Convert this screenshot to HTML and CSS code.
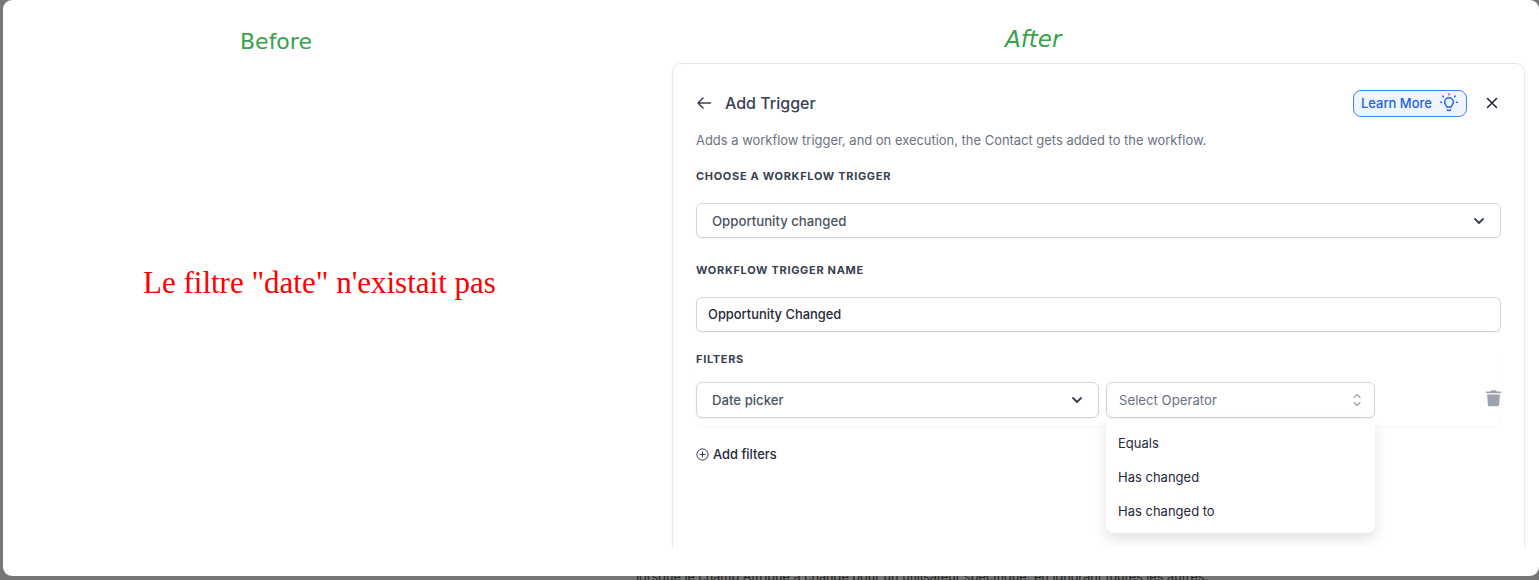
FILE: index.html
```html
<!DOCTYPE html>
<html lang="fr">
<head>
<meta charset="utf-8">
<title>Before / After</title>
<link rel="stylesheet" href="styles.css">
</head>
<body>
<div class="backdrop">
  <main class="modal">
    <section class="before">
      <h2 class="tag tag-before">Before</h2>
      <p class="missing">Le filtre "date" n'existait pas</p>
    </section>
    <section class="after">
      <h2 class="tag tag-after">After</h2>
      <div class="card">
        <header class="card-head">
          <svg class="back" viewBox="0 0 16 16" width="16" height="16" fill="none" stroke="#374151" stroke-width="1.500" stroke-linecap="round" stroke-linejoin="round"><path d="M14.500 8H2M7 3 2 8l5 5"/></svg>
          <h1 class="title">Add Trigger</h1>
          <a class="learn">Learn More
            <svg viewBox="0 0 20 20" width="20" height="20" fill="none" stroke="#2563eb" stroke-width="1.500" stroke-linecap="round" stroke-linejoin="round"><path d="M7.600 14c0-1.600-1.900-2.400-1.900-5a4.300 4.300 0 0 1 8.600 0c0 2.600-1.900 3.400-1.900 5z"/><path d="M8.300 16.800c.5.800 2.900.8 3.400 0M10 1v.8M3.700 3l.7.7M16.300 3l-.7.700M1.600 9.300h1M17.400 9.300h1"/></svg>
          </a>
          <svg class="close" viewBox="0 0 12 12" width="12" height="12" fill="none" stroke="#1f2937" stroke-width="1.600" stroke-linecap="round"><path d="M1.500 1.500l9 9M10.500 1.500l-9 9"/></svg>
        </header>
        <p class="sub">Adds a workflow trigger, and on execution, the Contact gets added to the workflow.</p>
        <div class="label label-first">CHOOSE A WORKFLOW TRIGGER</div>
        <div class="field select">
          <span>Opportunity changed</span>
          <svg class="chev" viewBox="0 0 12 8" width="12" height="8" fill="none" stroke="#374151" stroke-width="1.800" stroke-linecap="round" stroke-linejoin="round"><path d="M2 2l4 4 4-4"/></svg>
        </div>
        <div class="label label-name">WORKFLOW TRIGGER NAME</div>
        <div class="field input">Opportunity Changed</div>
        <div class="filters">
          <div class="label label-filters">FILTERS</div>
          <div class="filter-row">
            <div class="field select pick">
              <span>Date picker</span>
              <svg class="chev" viewBox="0 0 12 8" width="12" height="8" fill="none" stroke="#374151" stroke-width="1.800" stroke-linecap="round" stroke-linejoin="round"><path d="M2 2l4 4 4-4"/></svg>
            </div>
            <div class="op-wrap">
              <div class="field select op">
                <span>Select Operator</span>
                <svg viewBox="0 0 10 16" width="10" height="16" fill="none" stroke="#9ca3af" stroke-width="1.200" stroke-linecap="round" stroke-linejoin="round"><path d="M2 5.500 5 2.500l3 3M2 10.500l3 3 3-3"/></svg>
              </div>
              <ul class="menu">
                <li>Equals</li>
                <li>Has changed</li>
                <li>Has changed to</li>
              </ul>
            </div>
            <svg class="trash" viewBox="0 0 16 18" width="16" height="18" fill="#9ca3af"><path d="M5.500.8h5l.7 1.200H15.500a.6.6 0 0 1 .5.600V4H0V2.600A.6.6 0 0 1 .5 2h4.300zM1.200 5.200h13.600l-.8 11.300a1.500 1.500 0 0 1-1.500 1.300H3.500A1.500 1.500 0 0 1 2 16.500z"/></svg>
          </div>
        </div>
        <div class="add">
          <svg viewBox="0 0 14 14" width="13" height="13" fill="none" stroke="#1f2937" stroke-width="1"><circle cx="7" cy="7" r="6"/><path d="M7 3.800v6.400M3.800 7h6.400"/></svg>
          <span>Add filters</span>
        </div>
      </div>
    </section>
  </main>
  <p class="behind">lorsque le champ Attribué a changé pour un utilisateur spécifique, en ignorant toutes les autres.</p>
</div>
</body>
</html>
```
FILE: styles.css
```css
* { box-sizing: border-box; }
html, body { margin: 0; height: 100%; }
body { overflow: hidden; font-family: Inter, "Liberation Sans", sans-serif; }
.backdrop { height: 580px; overflow: hidden; background: #777; padding-left: 3px; }
.modal {
  position: relative; z-index: 1;
  display: flex; height: 576px; margin-bottom: -8px;
  background: #fff; border-radius: 9px;
  padding-bottom: 29px;
}
.before { width: 669px; flex: none; position: relative; }
.after { flex: 1; display: flex; flex-direction: column; min-width: 0; padding-right: 14px; }
.tag { margin: 0; font-family: "Comic Sans MS", cursive, "DejaVu Sans", sans-serif; font-weight: 400; color: #34a34a; font-size: 22px; line-height: 28px; }
.tag-before { padding: 28px 0 0 237px; }
.tag-after { padding: 25px 0 0 333px; height: 63px; font-style: italic; font-size: 23px; }
.missing { margin: 0; padding: 0 0 0 140px; position: absolute; top: 266px; font-family: "Liberation Serif", serif; font-size: 31px; line-height: 34px; color: #fe0000; }
.card {
  flex: 1; min-height: 0; overflow: hidden;
  border: 1px solid #e5e7eb; border-bottom: 0;
  border-radius: 9px 9px 0 0;
  padding: 0 23px;
  box-shadow: 0 1px 4px rgba(0,0,0,.04);
  clip-path: inset(-6px -6px 0 -6px);
}
.card-head { display: flex; align-items: center; height: 34px; margin-top: 22px; }
.back { margin-right: 13px; }
.title { margin: 0; font-size: 16px; font-weight: 500; color: #374151; flex: 1; }
.learn { display: flex; align-items: center; gap: 7px; height: 27px; padding: 0 7px; margin-right: 19px; border: 1px solid #3b82f6; border-radius: 8px; background: #eff5ff; color: #1d5fe0; font-size: 13px; font-weight: 500; }
.close { margin-right: 3px; }
.sub { margin: 0; padding-top: 10px; font-size: 12.950px; line-height: 20px; color: #6b7280; }
.label { font-size: 11px; font-weight: 700; letter-spacing: .68px; color: #374151; line-height: 14px; }
.label-first { margin-top: 19px; }
.label-name { margin-top: 25px; }
.field { border: 1px solid #d1d5db; border-radius: 6px; background: #fff; font-size: 12.900px; font-weight: 500; box-shadow: 0 1px 2px rgba(0,0,0,.06); display: flex; align-items: center; }
.select { justify-content: space-between; height: 35px; margin-top: 20px; padding: 0 15px; color: #4b5563; font-size: 13.200px; }
.input { height: 35px; margin-top: 20px; padding: 0 11px; color: #1f2937; }
.filters { border-radius: 8px; box-shadow: 0 1px 2px rgba(0,0,0,.05); padding-bottom: 8px; }
.label-filters { margin-top: 20px; }
.filter-row { display: flex; align-items: flex-start; margin-top: 16px; }
.filter-row .select { margin-top: 0; height: 36px; }
.pick { width: 403px; flex: none; }
.op-wrap { position: relative; width: 269px; margin-left: 7px; flex: none; }
.op { padding: 0 12px; color: #6b7280; font-weight: 400; }
.menu {
  position: absolute; left: 0; right: 0; top: 37px; z-index: 2;
  margin: 0; padding: 7px 0 5px; list-style: none; background: #fff;
  border-radius: 8px; box-shadow: 0 6px 14px rgba(0,0,0,.12);
  font-size: 13px; color: #1f2937;
}
.menu li { height: 34px; line-height: 34px; padding-left: 12px; }
.trash { margin: 7px 0 0 111px; }
.add { display: flex; align-items: center; gap: 4px; margin-top: 21px; font-size: 12.900px; font-weight: 500; color: #1f2937; }
.behind { margin: 0; padding-left: 633px; font-size: 12.700px; line-height: 17px; color: #222; }
```
